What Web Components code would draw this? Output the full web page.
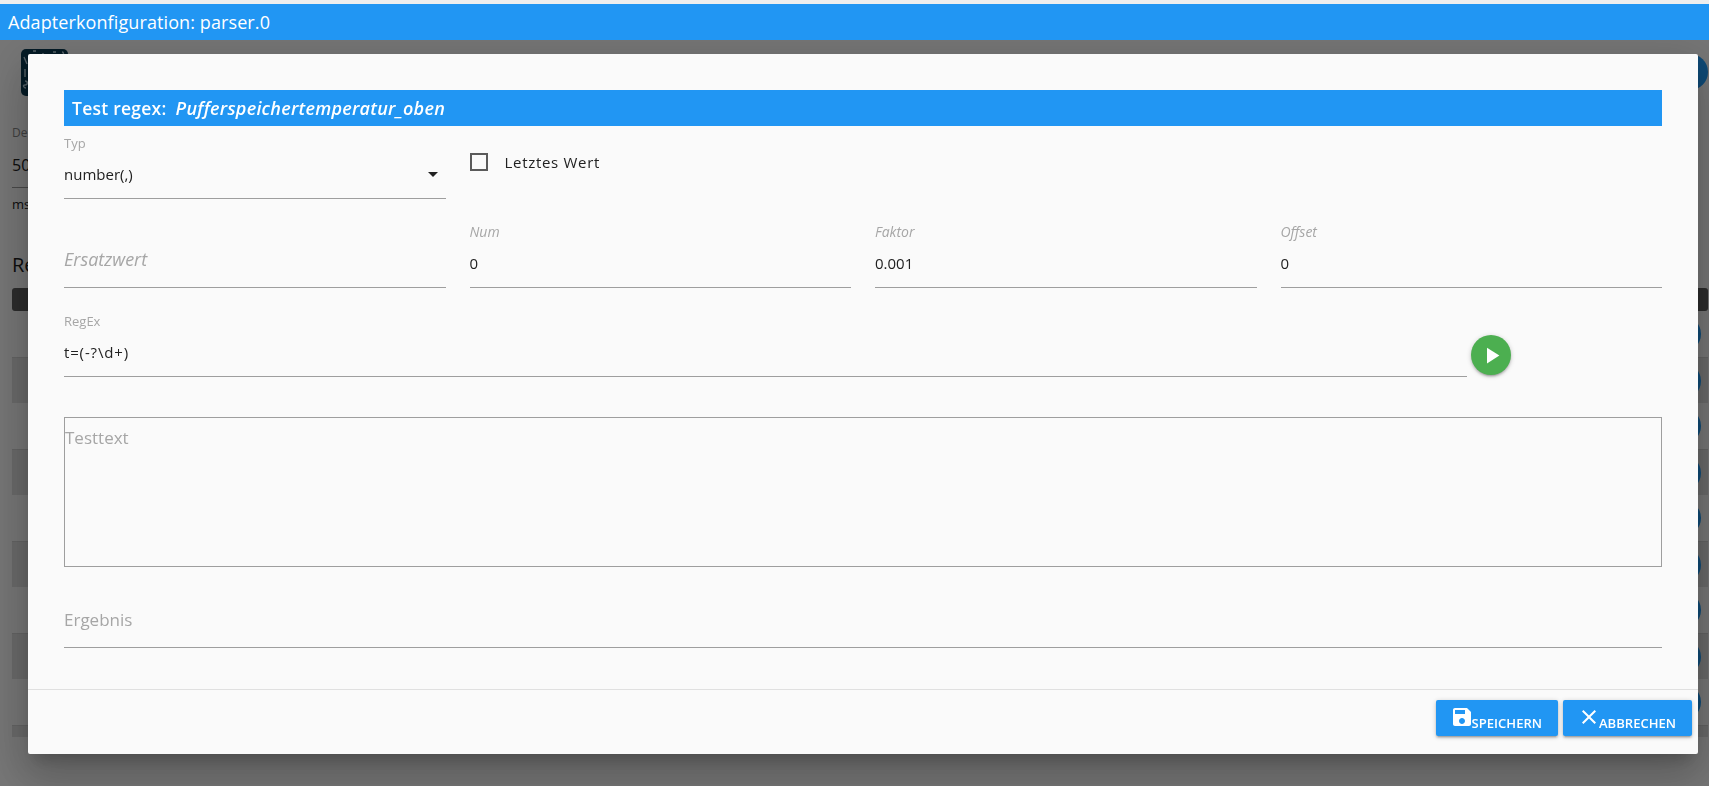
<!DOCTYPE html>
<html lang="de">
<head>
<meta charset="utf-8">
<title>Adapterkonfiguration: parser.0</title>
<style>
    html, body { margin: 0; height: 100%; overflow: hidden; background: #fff; }
    body { font-family: "Open Sans", "Noto Sans", sans-serif; color: #212121; }
</style>
</head>
<body>
<top-bar>Adapterkonfiguration: parser.0</top-bar>
<config-page></config-page>
<modal-overlay>
    <regex-dialog>
        <dialog-title name="Pufferspeichertemperatur_oben">Test regex:</dialog-title>

        <form-row class="first">
            <form-field label="Typ" value="number(,)" select></form-field>
            <check-box>Letztes Wert</check-box>
        </form-row>

        <form-row>
            <form-field placeholder="Ersatzwert" italic></form-field>
            <form-field label="Num" value="0" italic></form-field>
            <form-field label="Faktor" value="0.001" italic></form-field>
            <form-field label="Offset" value="0" italic></form-field>
        </form-row>

        <regex-row>
            <form-field label="RegEx" value="t=(-?\d+)" style="--value-spacing: 0.85px"></form-field>
            <play-button slot="action"></play-button>
        </regex-row>

        <text-box>Testtext</text-box>
        <form-field class="result" placeholder="Ergebnis"></form-field>

        <action-button slot="footer" icon="save">Speichern</action-button>
        <action-button slot="footer" icon="close">Abbrechen</action-button>
    </regex-dialog>
</modal-overlay>

<script>
const ICONS = {
    save: 'M17 3H5c-1.11 0-2 .9-2 2v14c0 1.1.89 2 2 2h14c1.1 0 2-.9 2-2V7l-4-4zm-5 16c-1.66 0-3-1.34-3-3s1.34-3 3-3 3 1.34 3 3-1.34 3-3 3zm3-10H5V5h10v4z',
    close: 'M19 6.41L17.59 5 12 10.59 6.41 5 5 6.41 10.59 12 5 17.59 6.41 19 12 13.41 17.59 19 19 17.59 13.41 12 19 6.41z',
    play: 'M8 5v14l11-7z'
};

class Base extends HTMLElement {
    constructor() {
        super();
        this.attachShadow({ mode: 'open' });
    }
}

class TopBar extends Base {
    connectedCallback() {
        this.shadowRoot.innerHTML = `
            <style>
                :host {
                    display: flex;
                    align-items: center;
                    position: relative;
                    z-index: 2;
                    height: 36px;
                    padding-left: 8px;
                    border-top: 4px solid #eeeeee;
                    background: #2196f3;
                    color: #fff;
                    font-size: 18px;
                    letter-spacing: 0.1px;
                }
            </style>
            <slot></slot>
        `;
    }
}

class ConfigPage extends Base {
    connectedCallback() {
        let rows = '';
        for (let i = 0; i < 9; i++) {
            rows += `<div class="row ${i % 2 ? 'odd' : ''}"><span class="fab"></span></div>`;
        }
        this.shadowRoot.innerHTML = `
            <style>
                :host { display: block; height: 746px; padding-left: 12px; padding-right: 1px; }
                .head { display: flex; justify-content: space-between; height: 63px; padding-top: 9px; box-sizing: border-box; }
                .logo { width: 47px; height: 47px; margin-left: 9px; }
                .fab-top { width: 36px; height: 36px; margin-top: 5px; border-radius: 50%; background: #1e9fff; }
                .de { height: 20px; margin-top: 20px; font-size: 12px; color: #8a8a8a; line-height: 20px; }
                .val { height: 44px; border-bottom: 1px solid #9e9e9e; width: 200px; font-size: 16px; line-height: 44px; }
                .ms { height: 24px; margin-top: 4px; font-size: 13px; line-height: 24px; }
                .re { height: 30px; margin-top: 34px; font-size: 20px; line-height: 30px; }
                .th { height: 23px; margin-top: 8px; border-radius: 3px; background: #5e5e5e; }
                .row { display: flex; align-items: center; justify-content: flex-end; height: 46px; padding-right: 7px; box-sizing: border-box; }
                .odd { background: #e4e4e4; border-top: 1px solid #d6d6d6; }
                .fab { width: 36px; height: 36px; border-radius: 50%; background: #1e9fff; }
                .tail { height: 12px; background: #e4e4e4; border-top: 1px solid #d6d6d6; box-sizing: border-box; }
            </style>
            <div class="head">
                <svg class="logo" viewBox="0 0 47 47">
                    <rect width="47" height="47" rx="5" fill="#0a3a52"></rect>
                    <path d="M3 8l3 7M4 20v8M4 32c3 0 3 4 0 4s-1 3 1 3M12 2h3M22 4v4M32 3h3M41 3c2 0 2 3 0 3" fill="none" stroke="#b9d2de" stroke-width="1.4"></path>
                </svg>
                <span class="fab-top"></span>
            </div>
            <div class="de">De</div>
            <div class="val">50</div>
            <div class="ms">ms</div>
            <div class="re">Re</div>
            <div class="th"></div>
            ${rows}
            <div class="tail"></div>
        `;
    }
}

class ModalOverlay extends Base {
    connectedCallback() {
        this.shadowRoot.innerHTML = `
            <style>
                :host {
                    display: block;
                    position: fixed;
                    top: 40px;
                    left: 0;
                    right: 0;
                    bottom: 0;
                    z-index: 1;
                    padding: 14px 11px 0 28px;
                    background: rgba(0, 0, 0, 0.54);
                }
            </style>
            <slot></slot>
        `;
    }
}

class RegexDialog extends Base {
    connectedCallback() {
        this.shadowRoot.innerHTML = `
            <style>
                :host {
                    display: flex;
                    flex-direction: column;
                    height: 700px;
                    border-radius: 2px;
                    background: #fafafa;
                    box-shadow: 0 24px 38px 3px rgba(0,0,0,.14), 0 9px 46px 8px rgba(0,0,0,.12), 0 11px 15px -7px rgba(0,0,0,.2);
                }
                .content { flex: 1; padding: 36px 36px 0; }
                .footer {
                    display: flex;
                    justify-content: flex-end;
                    gap: 5px;
                    height: 65px;
                    padding: 10px 6px 0 0;
                    box-sizing: border-box;
                    border-top: 1px solid #e0e0e0;
                }
            </style>
            <div class="content"><slot></slot></div>
            <div class="footer"><slot name="footer"></slot></div>
        `;
    }
}

class DialogTitle extends Base {
    connectedCallback() {
        const name = this.getAttribute('name');
        this.shadowRoot.innerHTML = `
            <style>
                :host {
                    display: flex;
                    align-items: center;
                    gap: 9px;
                    height: 36px;
                    padding-left: 8px;
                    background: #2196f3;
                    color: #fff;
                    font-size: 17.5px;
                    font-weight: 600;
                    letter-spacing: 0.25px;
                }
                i { font-size: 18px; font-weight: 600; }
            </style>
            <span><slot></slot></span><i>${name}</i>
        `;
    }
}

class FormRow extends Base {
    connectedCallback() {
        const first = this.classList.contains('first');
        this.shadowRoot.innerHTML = `
            <style>
                :host {
                    display: grid;
                    grid-template-columns: repeat(4, 1fr);
                    gap: 24px;
                    margin-top: ${first ? 0 : 16}px;
                }
            </style>
            <slot></slot>
        `;
    }
}

class FormField extends Base {
    connectedCallback() {
        const label = this.getAttribute('label');
        const value = this.getAttribute('value');
        const placeholder = this.getAttribute('placeholder');
        const italic = this.hasAttribute('italic');
        const isResult = this.classList.contains('result');
        this.shadowRoot.innerHTML = `
            <style>
                :host {
                    display: flex;
                    flex-direction: column;
                    justify-content: flex-end;
                    height: 73px;
                    box-sizing: border-box;
                    border-bottom: 1px solid #9e9e9e;
                    position: relative;
                    ${isResult ? 'margin-top: 8px;' : ''}
                }
                .label {
                    height: 20px;
                    margin-bottom: 9px;
                    color: #a6a6a6;
                    font-size: 13px;
                    line-height: 20px;
                    ${italic ? 'font-size: 14px; font-style: italic;' : ''}
                }
                .value {
                    height: 36px;
                    font-size: 15px;
                    line-height: 24px;
                    color: #212121;
                    letter-spacing: var(--value-spacing, 0);
                }
                .placeholder {
                    height: ${italic ? 40 : 39}px;
                    color: #a6a6a6;
                    font-size: 17px;
                    line-height: 24px;
                    ${italic ? 'font-size: 18px; font-style: italic;' : ''}
                }
                .arrow {
                    position: absolute;
                    right: 8px;
                    bottom: 21px;
                    border-left: 5px solid transparent;
                    border-right: 5px solid transparent;
                    border-top: 5px solid #212121;
                }
            </style>
            ${label ? `<div class="label">${label}</div>` : ''}
            ${value ? `<div class="value">${value}</div>` : ''}
            ${placeholder ? `<div class="placeholder">${placeholder}</div>` : ''}
            ${this.hasAttribute('select') ? '<span class="arrow"></span>' : ''}
        `;
    }
}

class CheckBox extends Base {
    connectedCallback() {
        this.shadowRoot.innerHTML = `
            <style>
                :host {
                    display: flex;
                    align-items: center;
                    gap: 17px;
                    height: 18px;
                    margin-top: 27px;
                    font-size: 15px;
                    letter-spacing: 0.7px;
                }
                .box { width: 18px; height: 18px; box-sizing: border-box; border: 2px solid #5a5a5a; }
            </style>
            <span class="box"></span><slot></slot>
        `;
    }
}

class RegexRow extends Base {
    connectedCallback() {
        this.shadowRoot.innerHTML = `
            <style>
                :host {
                    display: grid;
                    grid-template-columns: 1fr 40px;
                    align-items: end;
                    gap: 4px;
                    margin-top: 16px;
                    padding-right: 151px;
                }
            </style>
            <slot></slot>
            <slot name="action"></slot>
        `;
    }
}

class PlayButton extends Base {
    connectedCallback() {
        this.shadowRoot.innerHTML = `
            <style>
                :host {
                    display: flex;
                    align-items: center;
                    justify-content: center;
                    width: 40px;
                    height: 40px;
                    margin-bottom: 2px;
                    border-radius: 50%;
                    background: #4caf50;
                    box-shadow: 0 2px 2px 0 rgba(0,0,0,.14), 0 3px 1px -2px rgba(0,0,0,.12), 0 1px 5px 0 rgba(0,0,0,.2);
                }
                svg { width: 27px; height: 27px; fill: #fff; }
            </style>
            <svg viewBox="0 0 24 24"><path d="${ICONS.play}"></path></svg>
        `;
    }
}

class TextBox extends Base {
    connectedCallback() {
        this.shadowRoot.innerHTML = `
            <style>
                :host {
                    display: block;
                    height: 150px;
                    margin-top: 40px;
                    box-sizing: border-box;
                    border: 1px solid #9e9e9e;
                    padding-top: 8px;
                    color: #a6a6a6;
                    font-size: 17px;
                    line-height: 24px;
                }
            </style>
            <slot></slot>
        `;
    }
}

class ActionButton extends Base {
    connectedCallback() {
        const icon = this.getAttribute('icon');
        this.shadowRoot.innerHTML = `
            <style>
                :host {
                    display: flex;
                    height: 36px;
                    padding: 0 16px 0 14px;
                    border-radius: 2px;
                    background: #2196f3;
                    color: #fff;
                    font-size: 13.05px;
                    font-weight: 600;
                    text-transform: uppercase;
                    line-height: 18px;
                    box-shadow: 0 2px 2px 0 rgba(0,0,0,.14), 0 3px 1px -2px rgba(0,0,0,.12), 0 1px 5px 0 rgba(0,0,0,.2);
                }
                svg { flex: none; width: 24px; height: 24px; margin: 5px -2px 0 0; fill: #fff; }
                span { margin-top: 14px; }
            </style>
            <svg viewBox="0 0 24 24"><path d="${ICONS[icon]}"></path></svg>
            <span><slot></slot></span>
        `;
    }
}

customElements.define('top-bar', TopBar);
customElements.define('config-page', ConfigPage);
customElements.define('modal-overlay', ModalOverlay);
customElements.define('regex-dialog', RegexDialog);
customElements.define('dialog-title', DialogTitle);
customElements.define('form-row', FormRow);
customElements.define('form-field', FormField);
customElements.define('check-box', CheckBox);
customElements.define('regex-row', RegexRow);
customElements.define('play-button', PlayButton);
customElements.define('text-box', TextBox);
customElements.define('action-button', ActionButton);
</script>
</body>
</html>
